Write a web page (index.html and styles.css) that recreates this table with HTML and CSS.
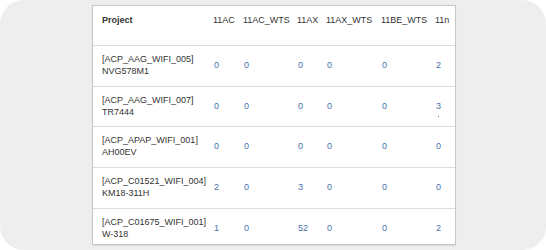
FILE: index.html
```html
<!DOCTYPE html>
<html>
<head>
<meta charset="utf-8">
<link rel="stylesheet" href="styles.css">
</head>
<body>
<div class="frame">
  <div class="panel">
    <table class="grid">
      <colgroup>
        <col class="c1"><col class="c2"><col class="c3"><col class="c4"><col class="c5"><col class="c6"><col class="c7">
      </colgroup>
      <thead>
        <tr>
          <th class="proj">Project</th>
          <th>11AC</th>
          <th>11AC_WTS</th>
          <th>11AX</th>
          <th>11AX_WTS</th>
          <th>11BE_WTS</th>
          <th>11n</th>
        </tr>
      </thead>
      <tbody>
        <tr>
          <td class="proj">[ACP_AAG_WIFI_005]<br>NVG578M1</td>
          <td class="num">0</td><td class="num">0</td><td class="num">0</td><td class="num">0</td><td class="num">0</td><td class="num">2</td>
        </tr>
        <tr>
          <td class="proj">[ACP_AAG_WIFI_007]<br>TR7444</td>
          <td class="num">0</td><td class="num">0</td><td class="num">0</td><td class="num">0</td><td class="num">0</td><td class="num dotted">3</td>
        </tr>
        <tr>
          <td class="proj">[ACP_APAP_WIFI_001]<br>AH00EV</td>
          <td class="num">0</td><td class="num">0</td><td class="num">0</td><td class="num">0</td><td class="num">0</td><td class="num">0</td>
        </tr>
        <tr>
          <td class="proj">[ACP_C01521_WIFI_004]<br>KM18-311H</td>
          <td class="num">2</td><td class="num">0</td><td class="num">3</td><td class="num">0</td><td class="num">0</td><td class="num">0</td>
        </tr>
        <tr>
          <td class="proj">[ACP_C01675_WIFI_001]<br>W-318</td>
          <td class="num">1</td><td class="num">0</td><td class="num">52</td><td class="num">0</td><td class="num">0</td><td class="num">2</td>
        </tr>
      </tbody>
    </table>
  </div>
</div>
</body>
</html>
```
FILE: styles.css
```css
html, body {
  margin: 0;
  padding: 0;
  background: #ffffff;
}
body {
  width: 546px;
  height: 250px;
  overflow: hidden;
  font-family: "Liberation Sans", Arial, sans-serif;
}
.frame {
  width: 546px;
  height: 250px;
  box-sizing: border-box;
  background: #eeeeee;
  border-radius: 24px;
  padding: 5px 0 0 92px;
}
.panel {
  width: 364px;
  height: 240px;
  box-sizing: border-box;
  background: #ffffff;
  border: 1px solid #c6c6c6;
  overflow: hidden;
  box-shadow: 0 1px 1px rgba(0,0,0,0.08);
}
.grid {
  border-collapse: collapse;
  table-layout: fixed;
  width: 362px;
  font-size: 9px;
  color: #333333;
}
.c1 { width: 117px; }
.c2 { width: 30px; }
.c3 { width: 54px; }
.c4 { width: 29px; }
.c5 { width: 55px; }
.c6 { width: 54px; }
.c7 { width: 23px; }
.grid th {
  font-weight: normal;
  text-align: left;
  vertical-align: top;
  padding: 8px 0 0 3px;
  height: 31px;
  line-height: 12px;
  white-space: nowrap;
  border-bottom: 1px solid #dddddd;
}
.grid th.proj {
  font-weight: bold;
  padding-left: 9px;
}
.grid td {
  padding: 8px 0 8px 3px;
  line-height: 11.85px;
  vertical-align: middle;
  white-space: nowrap;
  border-bottom: 1px solid #dddddd;
}
.grid td.proj {
  padding-left: 9px;
}
.grid td.num {
  color: #4670a8;
  padding-left: 4px;
}
.dotted {
  position: relative;
}
.dotted::after {
  content: "";
  position: absolute;
  left: 6px;
  top: 29px;
  width: 1px;
  height: 1px;
  background: #4670a8;
}
```
